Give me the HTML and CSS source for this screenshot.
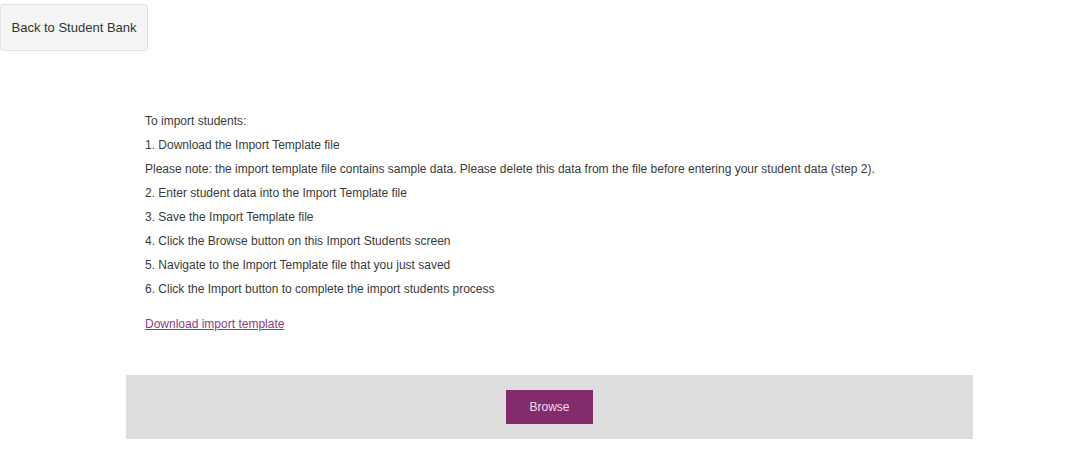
FILE: index.html
```html
<!DOCTYPE html>
<html>
<head>
    <title>Import Students</title>
    <meta name="viewport" content="width=device-width, initial-scale=1">
    <link rel="stylesheet" href="styles.css">
</head>
<body>
    <button class="back-btn" type="button">Back to Student Bank</button>
    <main class="import">
        <section class="instructions">
            <p>To import students:</p>
            <p>1. Download the Import Template file</p>
            <p>Please note: the import template file contains sample data. Please delete this data from the file before entering your student data (step 2).</p>
            <p>2. Enter student data into the Import Template file</p>
            <p>3. Save the Import Template file</p>
            <p>4. Click the Browse button on this Import Students screen</p>
            <p>5. Navigate to the Import Template file that you just saved</p>
            <p>6. Click the Import button to complete the import students process</p>
            <p class="template-link"><a href="#">Download import template</a></p>
        </section>
        <section class="upload">
            <button class="browse-btn" type="button">Browse</button>
        </section>
    </main>
</body>
</html>
```

FILE: styles.css
```css
body {
    background-color: #fff;
    color: #3a3a3a;
    font-family: "Liberation Sans", Arial, sans-serif;
    font-size: 12px;
    margin: 0;
    padding: 0;
}

.back-btn {
    display: block;
    margin-top: 4px;
    width: 148px;
    height: 47px;
    padding: 0;
    background-color: #f5f5f5;
    border: 1px solid #e3e3e3;
    border-radius: 3px;
    color: #333;
    font-family: inherit;
    font-size: 13px;
}

.import {
    padding-top: 58px;
}

.instructions {
    padding-left: 145px;
}

.instructions p {
    margin: 0;
    line-height: 24px;
}

.instructions .template-link {
    margin-top: 11px;
}

.template-link a {
    color: #8c3b80;
    text-decoration: underline;
}

.upload {
    display: flex;
    justify-content: center;
    align-items: center;
    margin: 39px 0 0 126px;
    width: 847px;
    height: 64px;
    background-color: #dedede;
}

.browse-btn {
    width: 87px;
    height: 34px;
    padding: 0;
    border: none;
    background-color: #832b6b;
    color: #f3dcef;
    font-family: inherit;
    font-size: 12px;
}
```
